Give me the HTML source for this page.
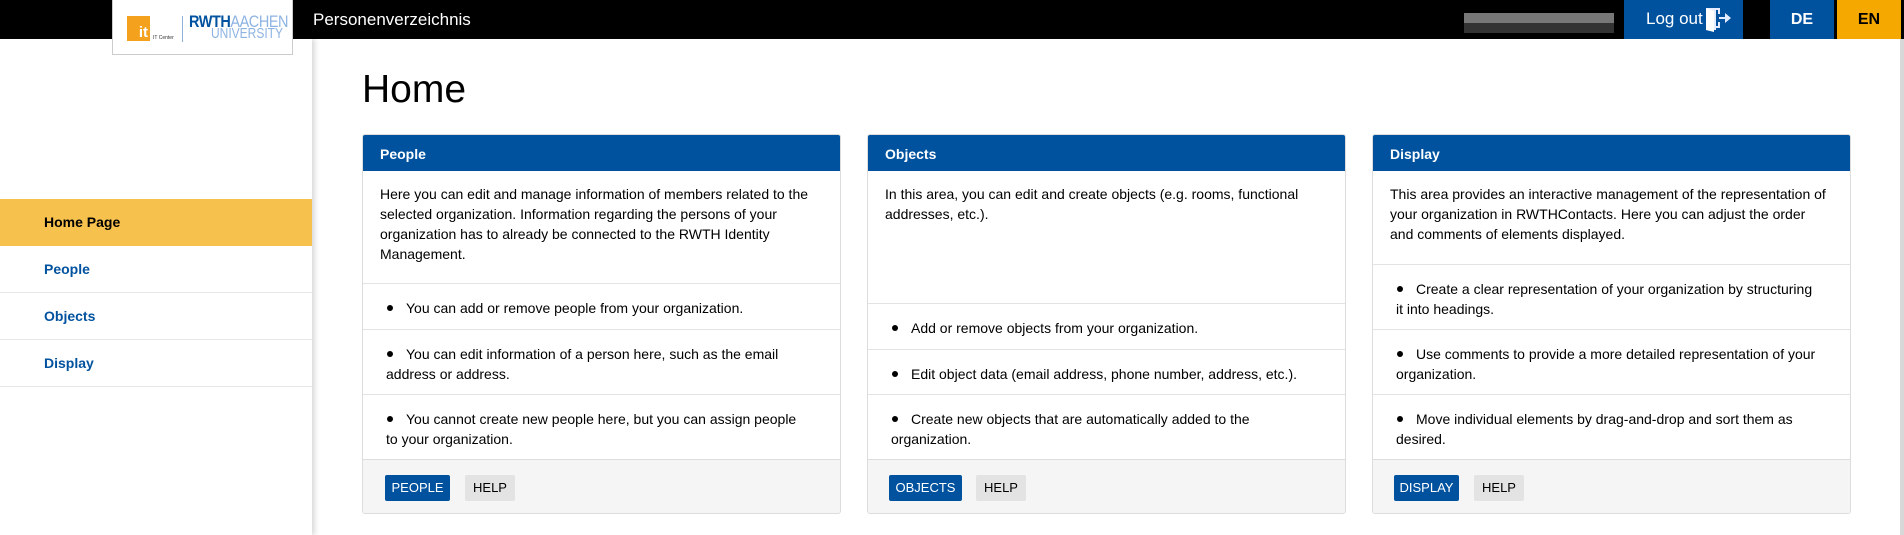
<!DOCTYPE html>
<html><head><meta charset="utf-8"><style>
*{box-sizing:border-box;margin:0;padding:0}
body{width:1904px;height:535px;overflow:hidden;background:#fff;font-family:"Liberation Sans",Arial,sans-serif;position:relative;color:#000}
.top{position:absolute;left:0;top:0;width:1904px;height:39px;background:#000}
.logo{position:absolute;left:112px;top:0;width:181px;height:55px;background:#fff;border:1px solid #ccc;border-top:none;z-index:3}
.sq{position:absolute;left:14px;top:16px;width:23px;height:25px;background:#f4a21d;color:#fff;font-weight:bold;font-size:15px;text-align:right;padding-right:2px;line-height:34px}
.itc{position:absolute;left:40px;top:35px;font-size:5px;color:#333}
.sep{position:absolute;left:69px;top:16px;width:1px;height:26px;background:#8fb0d8}
.rw{position:absolute;left:76px;top:14px;font-size:17px;line-height:15px;letter-spacing:-0.5px;transform:scaleX(.85);transform-origin:left top;white-space:nowrap}
.rw b{color:#00529f}.rw span{color:#8db3e2}
.uni{position:absolute;right:9px;top:27px;font-size:15px;line-height:14px;color:#8db3e2;transform:scaleX(.8);transform-origin:right top}
.pv{position:absolute;left:313px;top:10px;color:#fff;font-size:17px}
.blur{position:absolute;left:1464px;top:13px;width:150px;height:20px;background:linear-gradient(#777 50%,#333 50%)}
.lo{position:absolute;left:1624px;top:0;width:119px;height:39px;background:#00529f;color:#fff;font-size:17px;padding:9px 0 0 22px}
.lo svg{position:absolute;left:80px;top:6px}
.de{position:absolute;left:1770px;top:0;width:64px;height:39px;background:#00529f;color:#fff;font-weight:bold;font-size:16px;text-align:center;line-height:39px}
.en{position:absolute;left:1837px;top:0;width:64px;height:39px;background:#f5a800;color:#000;font-weight:bold;font-size:16px;text-align:center;line-height:39px}
.sb{position:absolute;right:0;top:39px;width:4px;height:496px;background:#d8d8d8}
.side{position:absolute;left:0;top:39px;width:312px;height:496px;background:#fff;box-shadow:3px 0 5px rgba(0,0,0,.15)}
.nav{position:absolute;left:0;width:312px;height:47px;border-bottom:1px solid #e8e8e8;font-weight:bold;font-size:14px;color:#00529f;padding:15px 0 0 44px}
.nav.a{background:#f7c14e;color:#000;border-bottom:none}
h1{position:absolute;left:362px;top:68px;font-size:39px;font-weight:normal}
.card{position:absolute;top:134px;width:479px;height:380px;border:1px solid #ddd;border-radius:3px;overflow:hidden;font-size:14px;line-height:20px;white-space:nowrap}
.hd{position:absolute;left:0;top:0;width:100%;height:36px;background:#00529f;color:#fff;font-weight:bold;padding:9px 17px}
.sec{position:absolute;left:0;width:100%;border-top:1px solid #e3e3e3;padding:14px 23px}
.sec.p{padding:13px 17px;border-top:none}
.ft{position:absolute;left:0;top:324px;width:100%;height:56px;background:#f5f5f5;border-top:1px solid #ddd}
.b{position:absolute;top:15px;height:26px;font-size:13px;line-height:26px;text-align:center;border-radius:2px}
.bb{background:#00529f;color:#fff}.bg{background:#e3e3e3;color:#000}
.dot{display:inline-block;width:6px;height:6px;border-radius:50%;background:#000;margin:0 13px 2px 1px}
</style></head><body>
<div class="top"></div>
<div class="logo"><div class="sq">it</div><div class="itc">IT Center</div><div class="sep"></div><div class="rw"><b>RWTH</b><span>AACHEN</span></div><div class="uni">UNIVERSITY</div></div>
<div class="pv">Personenverzeichnis</div>
<div class="blur"></div>
<div class="lo">Log out<svg width="28" height="26" viewBox="0 0 28 26"><path d="M2 2h10v22H2z" fill="#e6ecff"/><path d="M2 2l8 3v21l-8-2z" fill="#fff"/><path d="M12 2h4v6h-2V4h-2M12 22h4v-6h-2v4h-2" fill="#e6ecff"/><path d="M15 11h6V7l6 5-6 5v-4h-6z" fill="#e6ecff"/></svg></div>
<div class="de">DE</div><div class="en">EN</div>
<div class="sb"></div>
<div class="side">
<div class="nav a" style="top:160px">Home Page</div>
<div class="nav" style="top:207px">People</div>
<div class="nav" style="top:254px">Objects</div>
<div class="nav" style="top:301px">Display</div>
</div>
<h1>Home</h1>

<div class="card" style="left:362px">
<div class="hd">People</div>
<div class="sec p" style="top:36px;height:112px">Here you can edit and manage information of members related to the<br>selected organization. Information regarding the persons of your<br>organization has to already be connected to the RWTH Identity<br>Management.</div>
<div class="sec" style="top:148px;height:46px"><span class="dot"></span>You can add or remove people from your organization.</div>
<div class="sec" style="top:194px;height:65px"><span class="dot"></span>You can edit information of a person here, such as the email<br>address or address.</div>
<div class="sec" style="top:259px;height:65px"><span class="dot"></span>You cannot create new people here, but you can assign people<br>to your organization.</div>
<div class="ft"><div class="b bb" style="left:22px;width:65px">PEOPLE</div><div class="b bg" style="left:102px;width:50px">HELP</div></div>
</div>

<div class="card" style="left:867px">
<div class="hd">Objects</div>
<div class="sec p" style="top:36px;height:132px">In this area, you can edit and create objects (e.g. rooms, functional<br>addresses, etc.).</div>
<div class="sec" style="top:168px;height:46px"><span class="dot"></span>Add or remove objects from your organization.</div>
<div class="sec" style="top:214px;height:45px"><span class="dot"></span>Edit object data (email address, phone number, address, etc.).</div>
<div class="sec" style="top:259px;height:65px"><span class="dot"></span>Create new objects that are automatically added to the<br>organization.</div>
<div class="ft"><div class="b bb" style="left:21px;width:73px">OBJECTS</div><div class="b bg" style="left:108px;width:50px">HELP</div></div>
</div>

<div class="card" style="left:1372px">
<div class="hd">Display</div>
<div class="sec p" style="top:36px;height:93px">This area provides an interactive management of the representation of<br>your organization in RWTHContacts. Here you can adjust the order<br>and comments of elements displayed.</div>
<div class="sec" style="top:129px;height:65px"><span class="dot"></span>Create a clear representation of your organization by structuring<br>it into headings.</div>
<div class="sec" style="top:194px;height:65px"><span class="dot"></span>Use comments to provide a more detailed representation of your<br>organization.</div>
<div class="sec" style="top:259px;height:65px"><span class="dot"></span>Move individual elements by drag-and-drop and sort them as<br>desired.</div>
<div class="ft"><div class="b bb" style="left:21px;width:65px">DISPLAY</div><div class="b bg" style="left:101px;width:50px">HELP</div></div>
</div>
</body></html>
